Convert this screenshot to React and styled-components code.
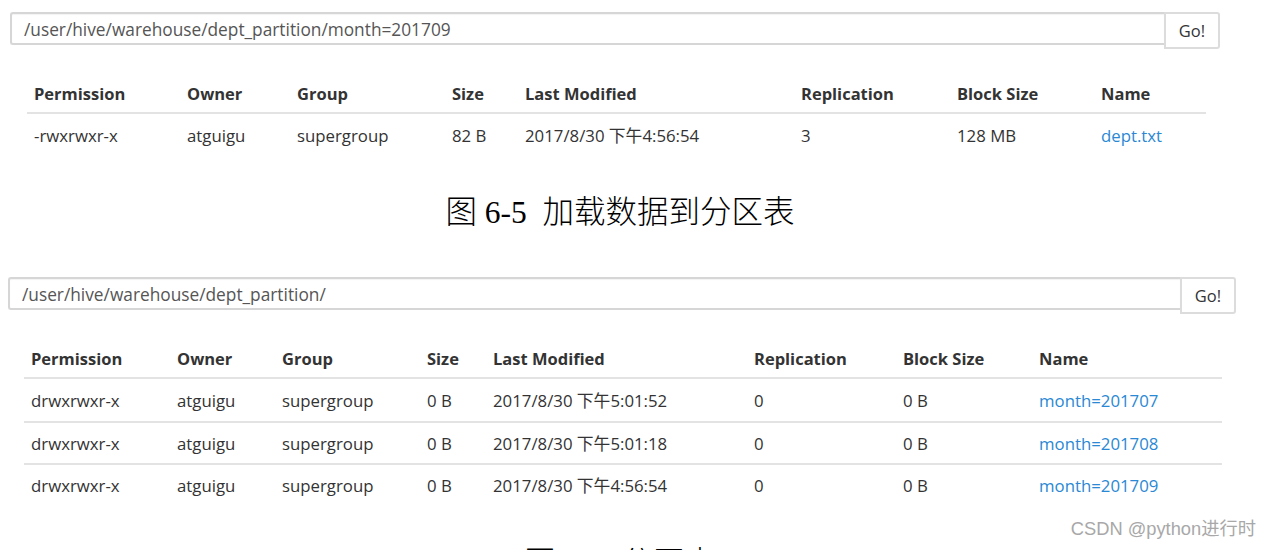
import React from 'react'
import styled, { createGlobalStyle } from 'styled-components';

const GlobalStyle = createGlobalStyle`
  html, body {
    margin: 0;
    padding: 0;
    background: #fff;
  }
  body {
    font-family: "Open Sans", "Noto Sans CJK SC", sans-serif;
    color: #333;
  }
`;

const COLS = ['Permission', 'Owner', 'Group', 'Size', 'Last Modified', 'Replication', 'Block Size', 'Name'];

const figures = [
  {
    left: 10,
    width: 1210,
    top: 12,
    path: '/user/hive/warehouse/dept_partition/month=201709',
    tableLeft: 17,
    tableWidth: 1179,
    cols: '153px 110px 155px 73px 276px 156px 144px 112px',
    rows: [
      ['-rwxrwxr-x', 'atguigu', 'supergroup', '82 B', '2017/8/30 下午4:56:54', '3', '128 MB', 'dept.txt'],
    ],
    caption: '图 6-5  加载数据到分区表',
    captionTop: 37,
  },
  {
    left: 8,
    width: 1228,
    top: 44,
    path: '/user/hive/warehouse/dept_partition/',
    tableLeft: 16,
    tableWidth: 1198,
    cols: '146px 105px 145px 66px 261px 149px 136px 190px',
    rows: [
      ['drwxrwxr-x', 'atguigu', 'supergroup', '0 B', '2017/8/30 下午5:01:52', '0', '0 B', 'month=201707'],
      ['drwxrwxr-x', 'atguigu', 'supergroup', '0 B', '2017/8/30 下午5:01:18', '0', '0 B', 'month=201708'],
      ['drwxrwxr-x', 'atguigu', 'supergroup', '0 B', '2017/8/30 下午4:56:54', '0', '0 B', 'month=201709'],
    ],
    caption: '图 6-6  分区表',
    captionTop: 39,
  },
];

export default function App() {
  return (
    <Page>
      <GlobalStyle />
      {figures.map((f, i) => (
        <React.Fragment key={i}>
          <Figure $left={f.left} $width={f.width} $top={f.top}>
            <SearchBar>
              <PathInput>{f.path}</PathInput>
              <GoButton>Go!</GoButton>
            </SearchBar>
            <Listing $left={f.tableLeft} $width={f.tableWidth}>
              <HeadRow $cols={f.cols}>
                {COLS.map(c => <Cell key={c}>{c}</Cell>)}
              </HeadRow>
              {f.rows.map((r, j) => (
                <BodyRow key={j} $cols={f.cols} $first={j === 0}>
                  {r.map((v, k) => (
                    k === 7 ? <LinkCell key={k}>{v}</LinkCell> : <Cell key={k}>{v}</Cell>
                  ))}
                </BodyRow>
              ))}
            </Listing>
          </Figure>
          <Caption $top={f.captionTop}>{f.caption}</Caption>
        </React.Fragment>
      ))}
      <Watermark>CSDN @python进行时</Watermark>
    </Page>
  )
}

const Page = styled.div`
  position: relative;
  width: 1272px;
  height: 550px;
  overflow: hidden;
  display: flex;
  flex-direction: column;
`;

const Figure = styled.div`
  margin-top: ${p => p.$top}px;
  margin-left: ${p => p.$left}px;
  width: ${p => p.$width}px;
`;

const SearchBar = styled.div`
  display: flex;
  align-items: flex-start;
`;

const PathInput = styled.div`
  flex: 1;
  box-sizing: border-box;
  height: 33px;
  padding: 1px 12px 0;
  display: flex;
  align-items: center;
  border: 2px solid #d6d6d6;
  border-right: none;
  border-radius: 3px 0 0 3px;
  font-size: 17.3px;
  color: #555;
  box-shadow: inset 0 1px 1px rgba(0, 0, 0, .05);
`;

const GoButton = styled.div`
  box-sizing: border-box;
  width: 56px;
  height: 37px;
  display: flex;
  align-items: center;
  justify-content: center;
  border: 2px solid #dcdcdc;
  border-radius: 0 3px 3px 0;
  background: #fff;
  font-size: 16.5px;
  color: #333;
`;

const Listing = styled.div`
  margin-top: 23px;
  margin-left: ${p => p.$left}px;
  width: ${p => p.$width}px;
`;

const HeadRow = styled.div`
  display: grid;
  grid-template-columns: ${p => p.$cols};
  box-sizing: border-box;
  height: 42px;
  padding-top: 2px;
  align-items: center;
  border-bottom: 2px solid #e3e3e3;
  font-weight: 700;
  font-size: 16.5px;
  color: #333;
`;

const BodyRow = styled.div`
  display: grid;
  grid-template-columns: ${p => p.$cols};
  box-sizing: border-box;
  height: 42px;
  align-items: center;
  border-top: ${p => p.$first ? 'none' : '2px solid #e3e3e3'};
  font-size: 16.8px;
  color: #333;
`;

const Cell = styled.div`
  padding: 0 7px;
  white-space: nowrap;
`;

const LinkCell = styled(Cell)`
  color: #2a88d4;
`;

const Caption = styled.div`
  margin-top: ${p => p.$top}px;
  width: 1240px;
  text-align: center;
  height: 40px;
  line-height: 40px;
  font-family: "Liberation Serif", "Noto Sans CJK SC", serif;
  font-size: 31.5px;
  font-weight: 300;
  color: #000;
  white-space: pre;
`;

const Watermark = styled.div`
  position: absolute;
  right: 16px;
  bottom: 10px;
  font-family: "Liberation Sans", "Noto Sans CJK SC", sans-serif;
  font-size: 18.3px;
  color: #a8a8a8;
`;
